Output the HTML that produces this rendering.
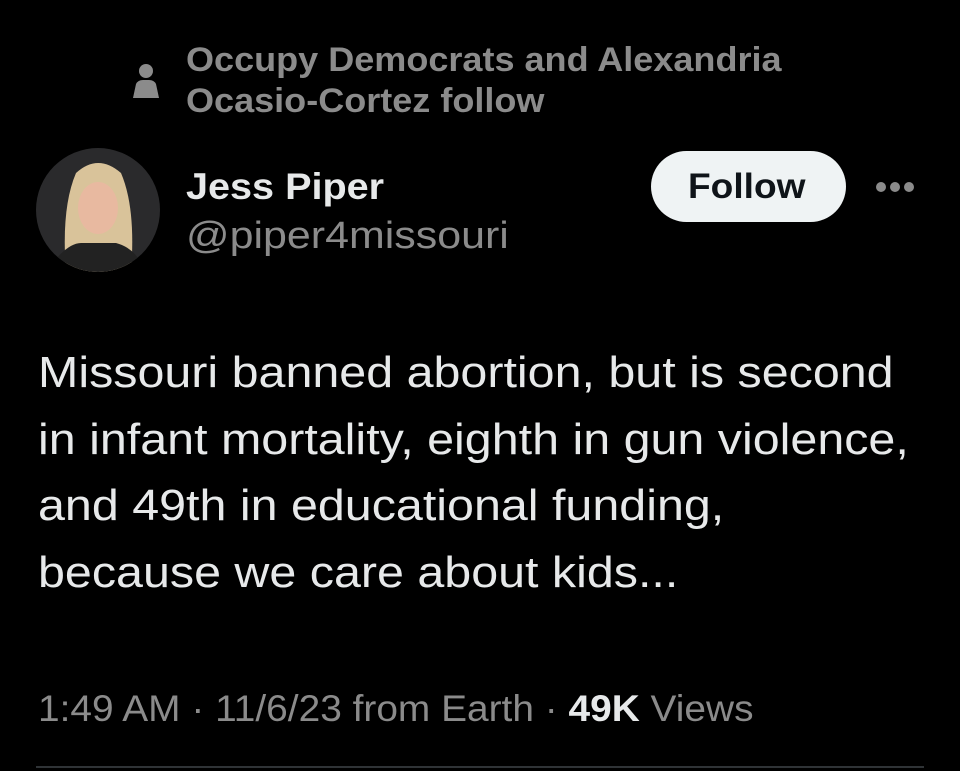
<!DOCTYPE html>
<html><head><meta charset="utf-8"><style>
html,body{margin:0;padding:0;background:#000;width:960px;height:771px;overflow:hidden;font-family:"Liberation Sans",sans-serif;}
.t{position:absolute;white-space:nowrap;transform-origin:0 0;}
</style></head><body>
<svg class="t" style="left:130px;top:62px" width="32" height="38" viewBox="0 0 32 38"><circle cx="16" cy="9" r="7" fill="#8b8b8b"/><path d="M3 36 L6 22 Q8 18 13 18 L19 18 Q24 18 26 22 L29 36 Z" fill="#8b8b8b"/></svg>
<div class="t" style="left:186px;top:40px;font-size:34px;font-weight:bold;color:#8b8b8b;line-height:41px;transform:scaleX(1.06)">Occupy Democrats and Alexandria<br>Ocasio-Cortez follow</div>
<svg class="t" style="left:36px;top:148px" width="124" height="124" viewBox="0 0 124 124">
<defs><clipPath id="c"><circle cx="62" cy="62" r="62"/></clipPath></defs>
<g clip-path="url(#c)"><rect width="124" height="124" fill="#2a2a2c"/>
<path d="M30 124 Q25 60 40 25 Q62 5 85 25 Q100 60 95 124 Z" fill="#d9c39a"/>
<ellipse cx="62" cy="60" rx="20" ry="26" fill="#e8b9a0"/>
<path d="M10 124 Q30 95 45 95 L80 95 Q100 100 110 124 Z" fill="#222"/></g></svg>
<div class="t" style="left:186px;top:166px;font-size:37px;font-weight:bold;color:#e7e9ea;transform:scaleX(1.07)">Jess Piper</div>
<div class="t" style="left:186px;top:215px;font-size:38px;color:#8b8b8b;transform:scaleX(1.13)">@piper4missouri</div>
<div class="t" style="left:651px;top:151px;width:195px;height:71px;border-radius:36px;background:#eff3f4;"></div>
<div class="t" style="left:688px;top:167px;font-size:35px;font-weight:bold;color:#0f1419;transform:scaleX(1.06)">Follow</div>
<svg class="t" style="left:874px;top:180px" width="44" height="14"><circle cx="7" cy="7" r="5" fill="#8b8b8b"/><circle cx="21" cy="7" r="5" fill="#8b8b8b"/><circle cx="35" cy="7" r="5" fill="#8b8b8b"/></svg>
<div class="t" style="left:38px;top:340px;font-size:44px;color:#e7e9ea;line-height:66.5px;transform:scaleX(1.1)">Missouri banned abortion, but is second<br>in infant mortality, eighth in gun violence,<br>and 49th in educational funding,<br>because we care about kids...</div>
<div class="t" style="left:38px;top:688px;font-size:37px;color:#8b8b8b;transform:scaleX(1.05)">1:49 AM · 11/6/23 from Earth · <b style="color:#e7e9ea">49K</b> Views</div>
<div class="t" style="left:36px;top:766px;width:888px;height:2px;background:#2f3336"></div>
</body></html>
